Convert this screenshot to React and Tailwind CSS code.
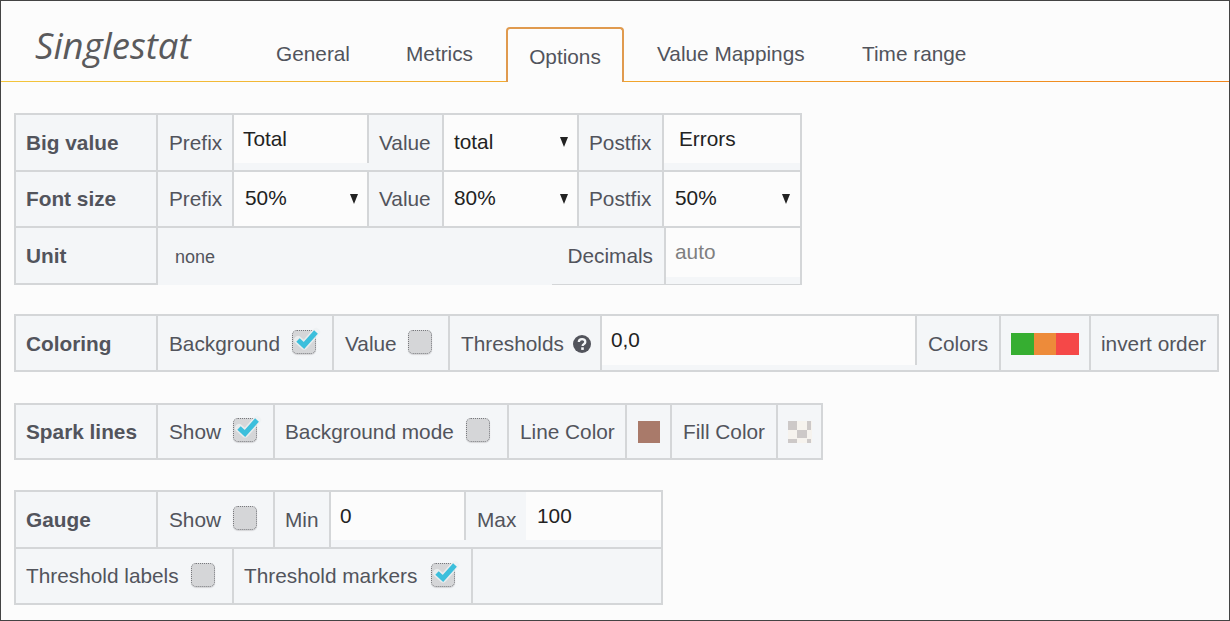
const B = "border-[#d4d6d8]";
const sans = { fontFamily: '"Liberation Sans", Arial, sans-serif' };

function Label({ w, bold, children, right = "border-r-2", pl = "pl-[11px]", pt = "pt-[1px]", className = "" }) {
  return (
    <div className={`${w} h-full shrink-0 flex items-center ${bold ? "pl-[10px] font-bold" : pl} ${pt} bg-[#f4f6f8] text-[#52545c] ${B} ${right} ${className}`}>
      {children}
    </div>
  );
}

function Input({ w, children, pl = "pl-[9px]", pb = "pb-0", inner = "h-[48px]", muted, className = "" }) {
  return (
    <div className={`${w} h-full shrink-0 bg-[#f4f6f8] ${className}`}>
      <div className={`${inner} flex items-center bg-[#fcfcfc] ${pl} ${pb} ${muted ? "text-[#7f7f80]" : "text-[#222222]"}`}>
        {children}
      </div>
    </div>
  );
}

function Select({ w, value, right = "border-r-2", pl = "pl-[10px]", pr = "pr-[9px]" }) {
  return (
    <div className={`${w} h-full shrink-0 flex items-center justify-between ${pl} ${pr} bg-[#fcfcfc] text-[#222222] ${B} ${right}`}>
      <span className="-mt-[1px]">{value}</span>
      <span className="w-0 h-0 -mt-[1px] border-x-[4px] border-x-transparent border-t-[10px] border-t-[#222222]" />
    </div>
  );
}

function Check({ on }) {
  return (
    <span className="relative inline-block w-[24px] h-[24px] -mt-[4px] shrink-0">
      <span className="absolute inset-0 rounded-[5px] bg-[#d5d6d8] border border-dotted border-[#77787c] shadow-[0_1px_1px_#d5d6d8]" />
      {on && (
        <svg className="absolute -top-[3px] left-[2px] overflow-visible" width="26" height="24" viewBox="0 0 26 24">
          <path d="M4 13 L10 18.5 L22 5" fill="none" stroke="#eef1f3" strokeWidth="8" strokeLinecap="round" strokeLinejoin="round" opacity="0.8" />
          <path d="M4 13 L10 18.5 L22 5" fill="none" stroke="#3cbfdc" strokeWidth="5" strokeLinejoin="miter" />
        </svg>
      )}
    </span>
  );
}

function Row({ h, last, children }) {
  return <div className={`flex ${h} ${last ? "" : `border-b-2 ${B}`}`}>{children}</div>;
}

function Table({ className = "", children }) {
  return <div className={`w-fit border-2 ${B} ${className}`}>{children}</div>;
}

function Tab({ children, className }) {
  return <div className={`text-[#52545c] ${className}`}>{children}</div>;
}

export default function App() {
  return (
    <div className="w-[1230px] h-[621px] box-border border border-[#444444] bg-[#fcfcfc] overflow-hidden text-[20.8px] leading-none" style={sans}>
      <header className="h-[80px] flex items-end border-b [border-image:linear-gradient(to_right,#f3c53c,#f0851c)_1] box-content">
        <div className="w-[275px] shrink-0 self-start pl-[34px] pt-[20px] text-[36.5px] leading-[48px] italic text-[#5a5a5c]" style={{ fontFamily: '"Open Sans", sans-serif' }}>
          Singlestat
        </div>
        <Tab className="w-[130px] pb-[16px]">General</Tab>
        <Tab className="w-[100px] pb-[16px]">Metrics</Tab>
        <div className="relative -mb-[1px] w-[118px] h-[55px] flex justify-center pt-[18px] rounded-t-[4px] border-2 border-b-0 border-[#e09a4e] bg-[#fcfcfc] text-[#52545c]">
          Options
        </div>
        <Tab className="pl-[33px] w-[238px] pb-[16px]">Value Mappings</Tab>
        <Tab className="pb-[16px]">Time range</Tab>
      </header>

      <main className="pl-[13px] pt-[31px]">
        <div className={`w-fit border-2 border-b-0 ${B}`}>
          <Row h="h-[57px]">
            <Label w="w-[142px]" bold>Big value</Label>
            <Label w="w-[76px]">Prefix</Label>
            <Input w="w-[135px]" inner={`h-[48px] border-r-2 ${B}`}>Total</Input>
            <Label w="w-[75px]" pl="pl-[10px]">Value</Label>
            <Select w="w-[135px]" value="total" />
            <Label w="w-[85px]" pl="pl-[10px]">Postfix</Label>
            <Input w="w-[136px]" pl="pl-[15px]" inner="h-[48px]">Errors</Input>
          </Row>
          <Row h="h-[56px]">
            <Label w="w-[142px]" bold>Font size</Label>
            <Label w="w-[76px]">Prefix</Label>
            <Select w="w-[135px]" value="50%" pl="pl-[11px]" />
            <Label w="w-[75px]" pl="pl-[10px]">Value</Label>
            <Select w="w-[135px]" value="80%" />
            <Label w="w-[85px]" pl="pl-[10px]">Postfix</Label>
            <Select w="w-[136px]" value="50%" right="" pl="pl-[11px]" pr="pr-[10px]" />
          </Row>
          <div className="flex h-[57px]">
            <Label w="w-[142px] border-b-2" bold>Unit</Label>
            <div className="w-[394px] h-full shrink-0 flex items-center pl-[17px] bg-[#f4f6f8] text-[18px] text-[#52545c]">none</div>
            <Label w="w-[114px] border-b" className="justify-end pr-[11px]" pl="pl-0">Decimals</Label>
            <Input w={`w-[134px] border-b ${B}`} muted inner="h-[49px]">auto</Input>
          </div>
        </div>

        <Table className="mt-[29px]">
          <Row h="h-[54px]" last>
            <Label w="w-[142px]" bold pt="pt-[2px]">Coloring</Label>
            <Label w="w-[176px]" pt="pt-[2px]" className="gap-[12px]">Background <Check on /></Label>
            <Label w="w-[116px]" pt="pt-[2px]" className="gap-[11px]">Value <Check /></Label>
            <Label w="w-[152px]" pt="pt-[2px]" className="gap-[9px]">
              Thresholds
              <svg width="18" height="18" viewBox="0 0 18 18" className="shrink-0">
                <circle cx="9" cy="9" r="9" fill="#52545c" />
                <path d="M5.8 7 C5.9 3.2 12.3 3.1 12.3 6.9 C12.3 9.1 9.6 9.1 9.6 11" fill="none" stroke="#f4f6f8" strokeWidth="2.3" />
                <rect x="8.2" y="12.3" width="2.6" height="2.6" fill="#f4f6f8" />
              </svg>
            </Label>
            <Input w="w-[315px]" inner={`h-[49px] border-r-2 ${B}`}>0,0</Input>
            <Label w="w-[84px]" pt="pt-[2px]">Colors</Label>
            <Label w="w-[90px]" pl="pl-[10px]">
              <span className="flex">
                <span className="w-[23px] h-[22px] bg-[#36ae31]" />
                <span className="w-[22px] h-[22px] bg-[#ed8b3a]" />
                <span className="w-[23px] h-[22px] bg-[#f54848]" />
              </span>
            </Label>
            <Label w="w-[126px]" right="" pl="pl-[10px]" pt="pt-[2px]">invert order</Label>
          </Row>
        </Table>

        <Table className="mt-[31px]">
          <Row h="h-[53px]" last>
            <Label w="w-[142px]" bold>Spark lines</Label>
            <Label w="w-[117px]" className="gap-[12px]">Show <Check on /></Label>
            <Label w="w-[234px]" pl="pl-[10px]" className="gap-[12px]">Background mode <Check /></Label>
            <Label w="w-[118px]">Line Color</Label>
            <Label w="w-[45px]"><span className="w-[22px] h-[22px] bg-[#a97a6a]" /></Label>
            <Label w="w-[106px]">Fill Color</Label>
            <Label w="w-[43px]" right="" pl="pl-[10px]">
              <svg width="24" height="22" viewBox="0 0 24 22" className="shrink-0">
                <rect width="24" height="22" fill="#f6f3ee" />
                <rect x="0" y="0" width="9" height="9" fill="#cdc9c8" />
                <rect x="9" y="9" width="10" height="8" fill="#cdc9c8" />
                <rect x="19" y="0" width="4" height="9" fill="#cdc9c8" />
                <rect x="0" y="18" width="9" height="4" fill="#cdc9c8" />
                <rect x="19" y="18" width="4" height="4" fill="#cdc9c8" />
              </svg>
            </Label>
          </Row>
        </Table>

        <Table className="mt-[30px]">
          <Row h="h-[57px]">
            <Label w="w-[142px]" bold>Gauge</Label>
            <Label w="w-[117px]" className="gap-[12px]">Show <Check /></Label>
            <Label w="w-[56px]" pl="pl-[10px]">Min</Label>
            <Input w="w-[135px]" inner={`h-[48px] border-r-2 ${B}`}>0</Input>
            <Label w="w-[60px]" right="">Max</Label>
            <Input w="w-[135px]" pl="pl-[11px]" inner="h-[48px]">100</Input>
          </Row>
          <Row h="h-[54px]" last>
            <Label w="w-[218px]" pl="pl-[10px]" className="gap-[12px]">Threshold labels <Check /></Label>
            <Label w="w-[239px]" pl="pl-[10px]" className="gap-[14px]">Threshold markers <Check on /></Label>
            <Label w="w-[188px]" right="" />
          </Row>
        </Table>
      </main>
    </div>
  );
}
